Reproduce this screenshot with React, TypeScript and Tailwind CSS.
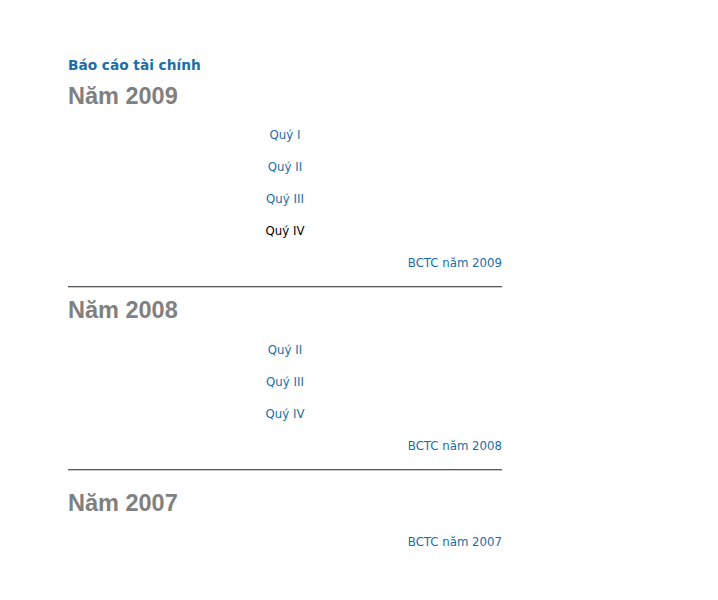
import React from "react";

const link = "text-[#1a6ea8]";

function Row({ children, right = false, dark = false }: { children: React.ReactNode; right?: boolean; dark?: boolean }) {
  return (
    <div className={`h-[32px] flex items-center ${right ? "justify-end" : "justify-center"}`}>
      <a className={`text-[11.75px] leading-none pt-[4px] ${dark ? "text-black" : link}`} style={{ fontFamily: "Tahoma, 'DejaVu Sans', sans-serif" }}>{children}</a>
    </div>
  );
}

function Heading({ children }: { children: React.ReactNode }) {
  return (
    <div className="h-[30px] flex items-center text-[23.5px] font-bold text-[#808080]" style={{ fontFamily: "'Liberation Sans', Arial, sans-serif" }}>
      {children}
    </div>
  );
}

function Rule() {
  return <div className="h-[2px] border-t border-t-[#5a5a5a] border-b border-b-[#c8c8c8]" />;
}

export default function App() {
  return (
    <div className="w-[718px] h-[600px] bg-white" style={{ fontFamily: "'Liberation Sans', Arial, sans-serif" }}>
      <div className="ml-[68px] w-[434px] pt-[55px]">
        <div className="h-[20px] flex items-center text-[13.7px] font-bold text-[#1a6ea8]" style={{ fontFamily: "'DejaVu Sans', Verdana, sans-serif" }}>
          Báo cáo tài chính
        </div>
        <div className="mt-[7px]">
          <Heading>Năm 2009</Heading>
        </div>
        <div className="mt-[6px]">
          <Row>Quý I</Row>
          <Row>Quý II</Row>
          <Row>Quý III</Row>
          <Row dark>Quý IV</Row>
          <Row right>BCTC năm 2009</Row>
        </div>
        <div className="mt-[8px]"><Rule /></div>
        <div className="mt-[8px]">
          <Heading>Năm 2008</Heading>
        </div>
        <div className="mt-[7px]">
          <Row>Quý II</Row>
          <Row>Quý III</Row>
          <Row>Quý IV</Row>
          <Row right>BCTC năm 2008</Row>
        </div>
        <div className="mt-[8px]"><Rule /></div>
        <div className="mt-[18px]">
          <Heading>Năm 2007</Heading>
        </div>
        <div className="mt-[6px]">
          <Row right>BCTC năm 2007</Row>
        </div>
      </div>
    </div>
  );
}
